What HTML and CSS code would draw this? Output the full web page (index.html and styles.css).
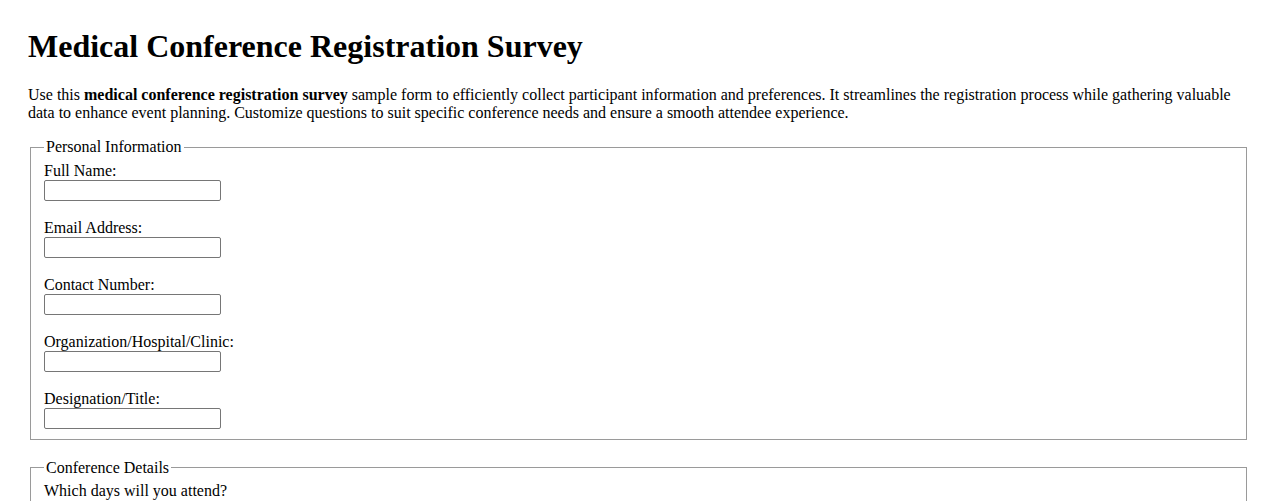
FILE: index.html
```html
<!DOCTYPE html>
<html lang="en">
<head>
<meta charset="utf-8">
<title>Medical Conference Registration Survey</title>
<link rel="stylesheet" href="styles.css">
</head>
<body>
<div class="page">
<h1 class="title">Medical Conference Registration Survey</h1>
<p class="intro">Use this <strong>medical conference registration survey</strong> sample form to efficiently collect participant information and preferences. It streamlines the registration process while gathering valuable data to enhance event planning. Customize questions to suit specific conference needs and ensure a smooth attendee experience.</p>
<form>
<fieldset class="group">
<legend class="group-title">Personal Information</legend>
<label class="field-label" for="name">Full Name:</label><br>
<input class="text-input" type="text" id="name"><br><br>
<label class="field-label" for="email">Email Address:</label><br>
<input class="text-input" type="email" id="email"><br><br>
<label class="field-label" for="phone">Contact Number:</label><br>
<input class="text-input" type="tel" id="phone"><br><br>
<label class="field-label" for="org">Organization/Hospital/Clinic:</label><br>
<input class="text-input" type="text" id="org"><br><br>
<label class="field-label" for="title">Designation/Title:</label><br>
<input class="text-input" type="text" id="title">
</fieldset>
<fieldset class="group">
<legend class="group-title">Conference Details</legend>
<label class="field-label">Which days will you attend?</label><br>
<label class="option"><input type="checkbox"> Day 1</label><br>
<label class="option"><input type="checkbox"> Day 2</label><br>
<label class="option"><input type="checkbox"> Day 3</label>
</fieldset>
</form>
</div>
</body>
</html>
```
FILE: styles.css
```css
html, body {
  margin: 0;
  padding: 0;
  background: #ffffff;
}
body {
  font-family: "Liberation Serif", "Times New Roman", serif;
  font-size: 16px;
  color: #000000;
}
.page {
  padding: 28px;
}
.title {
  font-size: 32px;
  font-weight: bold;
  margin: 0 0 21px 0;
}
.intro {
  margin: 0 0 16px 0;
  line-height: normal;
}
.group {
  margin: 0 3px 19px 2px;
  padding: 0.35em 12px 0.625em 13px;
  border: 1px solid #9a9a9a;
}
.group-title {
  padding: 0 2px;
}
.text-input {
  box-sizing: border-box;
  width: 177px;
  height: 21px;
  border: 1px solid #767676;
  border-radius: 2px;
  padding: 1px 2px;
  font-family: Arial, "Liberation Sans", sans-serif;
  font-size: 13.33px;
  background: #ffffff;
  vertical-align: baseline;
}
```
